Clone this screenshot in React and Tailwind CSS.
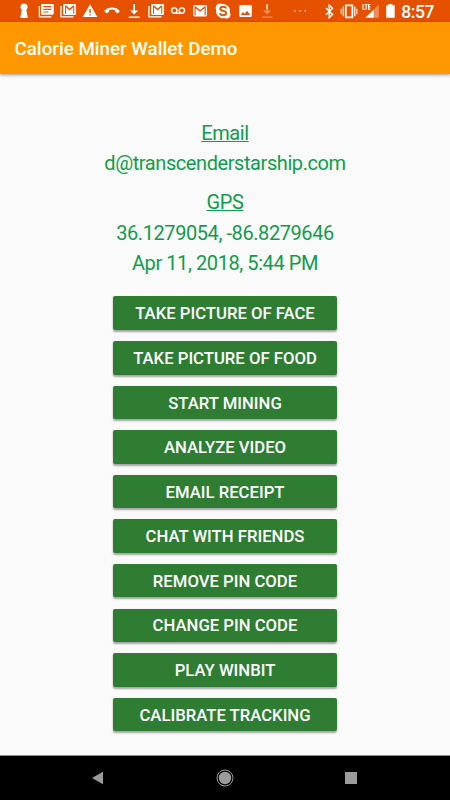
import React from 'react';

const ICON = 'h-[22px] w-[22.1px] shrink-0 fill-white';

const MailShape = () => (
  <path
    fillRule="evenodd"
    d="M5.6 5h11c.8 0 1.4.6 1.4 1.4v8.700c0 .8-.6 1.400-1.400 1.400h-11c-.8 0-1.400-.6-1.400-1.400V6.400C4.200 5.600 4.800 5 5.600 5zM6.600 15.200V8.300L11.100 11.800L15.600 8.300V15.200H16.700V6.200H15.900L11.100 9.900L6.300 6.200H5.500V15.200z"
  />
);

const StackedMail = () => (
  <svg viewBox="0 0 22 22" className={ICON}>
    <path
      fillRule="evenodd"
      d="M7.300 3.900h10.500c.7 0 1.200.5 1.200 1.200v8.700c0 .7-.5 1.200-1.200 1.200H7.300c-.7 0-1.200-.5-1.200-1.200V5.100c0-.7.500-1.200 1.200-1.200zM8 13.700h1V7.200l3.600 3.200l3.600-3.200v6.500h1V5.400h-1.100L12.600 8.600L9.100 5.400H8z"
    />
    <path d="M3.200 6h1.300v10.300h12v1.300H4.300c-.6 0-1.100-.4-1.100-1z" />
  </svg>
);

const notifications = [
  {
    name: 'keyhole',
    art: <path d="M11 3.400a3.700 3.700 0 0 1 2.300 6.600L14.800 18H7.200L8.700 10A3.700 3.700 0 0 1 11 3.400z" />,
  },
  {
    name: 'news',
    art: (
      <>
        <path
          fillRule="evenodd"
          d="M7.200 4h10.300c.7 0 1.200.5 1.200 1.200v8.300c0 .7-.5 1.200-1.200 1.200H7.200c-.7 0-1.200-.5-1.200-1.200V5.200C6 4.500 6.500 4 7.200 4zM8.300 6v1.200h8V6zM8.300 8.700v1.200h8V8.700zM8.300 11.400v1.200h5v-1.200z"
        />
        <path d="M3.700 6H5v10.200h11.300v1.300H4.800c-.6 0-1.100-.5-1.100-1.100z" />
      </>
    ),
  },
  { name: 'mails' },
  {
    name: 'warning',
    art: <path fillRule="evenodd" d="M11 4.300L18.300 17H3.700zM10.300 8.900v4.100h1.400V8.900zM10.300 14.200v1.400h1.400v-1.400z" />,
  },
  {
    name: 'call',
    art: (
      <path d="M11 7.600c3.100 0 5.700 1.200 7.500 3.100.3.300.2.600 0 .8l-1.500 1.600c-.3.300-.6.300-.9.100l-1.800-1.300c-.3-.2-.4-.5-.4-.8V9.900a9 9 0 0 0-5.800 0v1.200c0 .3-.1.600-.4.800l-1.800 1.300c-.3.200-.6.200-.9-.1l-1.500-1.600c-.2-.2-.3-.5 0-.8C5.300 8.800 7.900 7.600 11 7.600z" />
    ),
  },
  { name: 'download', art: <path d="M10.200 4h1.800v6.500h3.200L11.100 14.600L7 10.500h3.200zM5.700 16.500h10.800v1.400H5.700z" /> },
  { name: 'mails' },
  {
    name: 'voicemail',
    art: (
      <path
        fill="none"
        stroke="#fff"
        strokeWidth="1.500"
        d="M7.200 13.200a2.700 2.700 0 1 1 .1 0h7.500a2.700 2.700 0 1 1 .1 0z"
      />
    ),
  },
  { name: 'mail', art: <MailShape /> },
  {
    name: 'skype',
    art: (
      <>
        <path d="M7.800 3.500c1 0 1.700.3 2.300.6a6.900 6.900 0 0 1 7.700 8.300c.4.600.7 1.300.7 2.100a4.100 4.100 0 0 1-6.100 3.500a6.900 6.900 0 0 1-8.200-8.300A4.200 4.200 0 0 1 7.800 3.500z" />
        <path
          fill="none"
          stroke="#e65100"
          strokeWidth="1.900"
          d="M14.200 8.500c-.5-1.200-1.600-1.700-3.100-1.700c-1.700 0-2.900.7-2.900 2c0 1.500 1.400 1.700 3.100 2.100c1.700.4 2.900.7 2.900 2.100c0 1.500-1.300 2.200-3 2.200c-1.800 0-3-.7-3.300-2.100"
        />
      </>
    ),
  },
  {
    name: 'image',
    art: (
      <path
        fillRule="evenodd"
        d="M6.400 5h10.200c.7 0 1.200.5 1.200 1.200v9.600c0 .7-.5 1.200-1.200 1.200H6.400c-.7 0-1.200-.5-1.200-1.200V6.200C5.200 5.500 5.700 5 6.400 5zM6.800 15h9.400L13 10.700L10.600 13.800L9 11.900z"
      />
    ),
  },
  {
    name: 'downloading',
    art: (
      <>
        <path opacity=".85" d="M10.200 4.200h1.700v5h-1.700z" />
        <path opacity=".35" d="M10.200 9.200h1.700v1.300h3.100L11 14.600L7 10.500h3.200zM6 16.500h10.500v1.300H6z" />
      </>
    ),
  },
];

const labels = [
  'Take picture of face',
  'Take picture of food',
  'Start mining',
  'Analyze video',
  'Email receipt',
  'Chat with friends',
  'Remove pin code',
  'Change pin code',
  'Play Winbit',
  'Calibrate tracking',
];

const StatusBar = () => (
  <div className="flex h-[22px] shrink-0 items-center bg-[#e65100] pl-[12.700px]">
    {notifications.map(({ name, art }, index) =>
      name === 'mails' ? (
        <StackedMail key={index} />
      ) : (
        <svg key={index} viewBox="0 0 22 22" className={ICON}>
          {art}
        </svg>
      )
    )}
    {/* overflow dots, bluetooth, vibrate, signal, battery */}
    <svg viewBox="0 0 122 22" className="h-[22px] w-[122px] shrink-0 fill-white">
      <path opacity=".8" d="M16.400 10.200h1.500v1.300h-1.500zM21.400 10.200h1.500v1.300h-1.500zM26.400 10.200h1.500v1.300h-1.500z" />
      <path fill="none" stroke="#fff" strokeWidth="1.500" d="M48 8l6.500 6.500l-3.200 3V5.200l3.200 3l-6.500 6.500" />
      <path fill="none" stroke="#fff" strokeWidth="1.700" d="M67.800 5.400h6.600v12h-6.600z" />
      <path opacity=".8" d="M64.600 6.500h1.500v9.800h-1.500zM62.600 8.700h1.300v5.500h-1.300zM76 6.500h1.500v9.800H76zM78.200 8.700h1.300v5.500h-1.300z" />
      <path opacity=".35" d="M95.800 17.800V9.400L100.800 4.400V17.800z" />
      <path d="M87.400 17.800L95.800 9.400V17.800z" />
      <path fill="none" stroke="#fff" strokeWidth="1.100" d="M84.900 4v5.300h2M86.600 4.500h3M88.100 4.500v5.300M92.400 4.500h-1.800v4.700h1.800M90.600 6.900h1.700" />
      <path d="M108.200 5.200h2.200V4h4v1.200h2.300v12.600h-8.500z" />
    </svg>
    <span className="ml-[1.500px] translate-y-[1px] text-[17.500px] leading-[22px] font-medium tracking-[-0.4px] text-white">
      8:57
    </span>
  </div>
);

const App = () => {
  return (
    <div className="flex h-[800px] w-[450px] flex-col overflow-hidden bg-[#fafafa] font-['Roboto',sans-serif]">
      <StatusBar />
      <header className="flex h-[52px] shrink-0 items-center bg-[#ff9800] pt-[2px] pl-[14.500px] shadow-[0_1px_3px_rgba(0,0,0,0.4)]">
        <h1 className="text-[18.750px] font-medium text-white">Calorie Miner Wallet Demo</h1>
      </header>

      <main className="flex flex-1 flex-col items-center pt-[43.500px] text-[20px] leading-[30.400px] tracking-[-0.42px] text-[#109c4a]">
        <p className="underline decoration-1">Email</p>
        <p>d@transcenderstarship.com</p>
        <p className="mt-[9px] underline decoration-1">GPS</p>
        <p>36.1279054, -86.8279646</p>
        <p>Apr 11, 2018, 5:44 PM</p>

        <div className="mt-[17.900px] flex flex-col gap-[11.100px]">
          {labels.map((label) => (
            <button
              key={label}
              className="h-[33.500px] w-[224px] rounded-[2px] bg-[#2e7d32] pt-[3px] text-[16.700px] leading-none font-medium tracking-normal text-white uppercase shadow-[0_1.5px_2px_rgba(0,0,0,0.35)]"
            >
              {label}
            </button>
          ))}
        </div>
      </main>

      <nav className="flex h-[45px] shrink-0 items-center justify-center gap-[109px] border-t border-[#8a8f8c] bg-black">
        <svg viewBox="0 0 18 18" className="h-[18px] w-[18px] fill-[#9b9b9b]">
          <path d="M3 9L14 2.800V15.200z" />
        </svg>
        <svg viewBox="0 0 18 18" className="h-[18px] w-[18px] fill-[#9b9b9b]">
          <circle cx="9" cy="9" r="6.200" />
          <circle cx="9" cy="9" r="8" fill="none" stroke="#9b9b9b" strokeWidth="1" />
        </svg>
        <svg viewBox="0 0 18 18" className="h-[18px] w-[18px] fill-[#9b9b9b]">
          <path d="M2 3h12v12H2z" />
        </svg>
      </nav>
    </div>
  );
};

export default App;
